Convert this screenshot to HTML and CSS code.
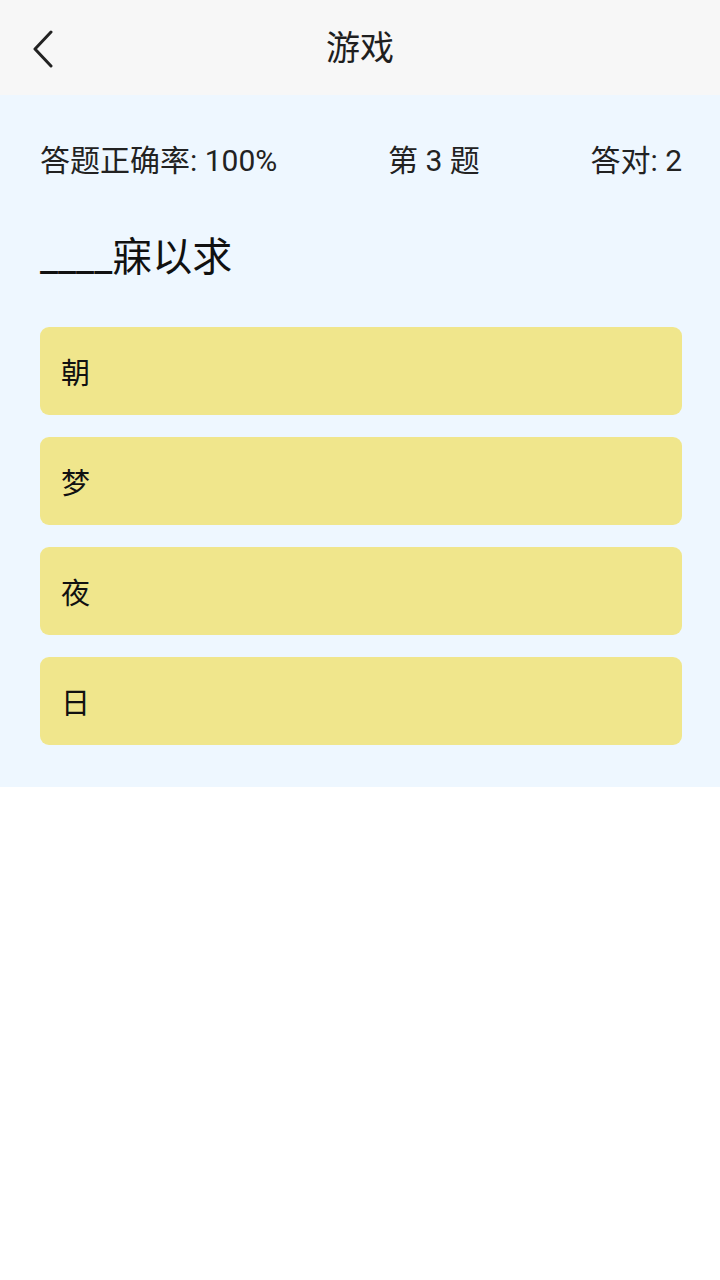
FILE: index.html
```html
<!DOCTYPE html>
<html lang="zh-CN">
<head>
<meta charset="utf-8">
<title>游戏</title>
<link rel="stylesheet" href="styles.css">
</head>
<body>
<header class="topbar">
  <button class="back" aria-label="返回">
    <svg width="24" height="38" viewBox="0 0 24 38"><path d="M20 2 L4 19 L20 36" fill="none" stroke="#222" stroke-width="3" stroke-linecap="round" stroke-linejoin="round"/></svg>
  </button>
  <h1 class="title">游戏</h1>
</header>
<main class="game">
  <div class="stats">
    <span>答题正确率: 100%</span>
    <span>第 3 题</span>
    <span>答对: 2</span>
  </div>
  <div class="question">____寐以求</div>
  <div class="options">
    <div class="option">朝</div>
    <div class="option">梦</div>
    <div class="option">夜</div>
    <div class="option">日</div>
  </div>
</main>
</body>
</html>
```
FILE: styles.css
```css
* { box-sizing: border-box; }
html, body { margin: 0; padding: 0; background: #ffffff; }
body {
  font-family: Roboto, "Noto Sans CJK SC", sans-serif;
  color: #222222;
  width: 720px;
}
.topbar {
  position: relative;
  height: 95px;
  background: #f7f7f7;
  display: flex;
  align-items: center;
  justify-content: center;
}
.back {
  position: absolute;
  left: 31px;
  top: 30px;
  width: 24px;
  height: 38px;
  padding: 0;
  border: 0;
  background: none;
  display: flex;
}
.title {
  margin: 0;
  font-size: 34px;
  font-weight: 400;
  line-height: 40px;
  color: #1f1f1f;
}
.game {
  background: #eef7ff;
  padding: 46px 38px 42px 40px;
}
.stats {
  display: flex;
  justify-content: space-between;
  font-size: 30px;
  line-height: 40px;
  color: #222;
}
.question {
  margin-top: 52px;
  font-size: 40px;
  line-height: 50px;
  color: #111;
}
.options {
  margin-top: 44px;
  display: flex;
  flex-direction: column;
  gap: 22px;
}
.option {
  height: 88px;
  background: #f0e68c;
  border-radius: 9px;
  padding-left: 21px;
  display: flex;
  align-items: center;
  font-size: 29px;
  color: #111;
}
```
